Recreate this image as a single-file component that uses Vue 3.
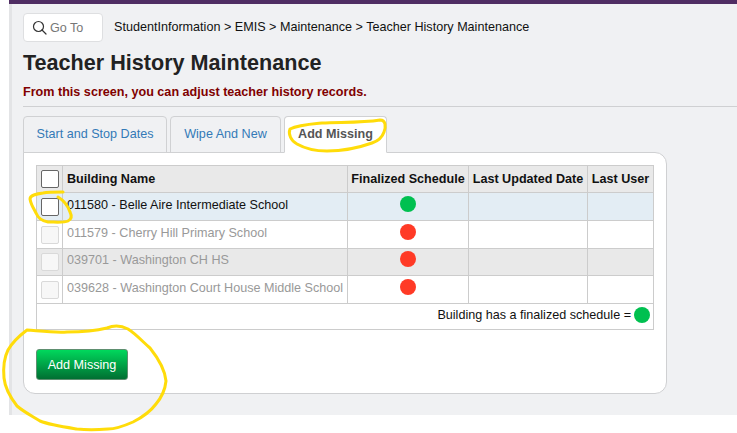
<script setup>
const rows = [
  { name: '011580 - Belle Aire Intermediate School', ok: true, cls: 'sel' },
  { name: '011579 - Cherry Hill Primary School', ok: false, cls: 'dis' },
  { name: '039701 - Washington CH HS', ok: false, cls: 'dis alt' },
  { name: '039628 - Washington Court House Middle School', ok: false, cls: 'dis' },
]
</script>

<template>
  <div class="page">
    <div class="app">
      <div class="topbar"></div>
      <div class="nav">
        <div class="goto">
          <svg width="15" height="15" viewBox="0 0 15 15" fill="none" stroke="#333" stroke-width="1.2">
            <circle cx="6.5" cy="6.5" r="5" />
            <path d="M10 10l4 4" stroke-linecap="round" />
          </svg>
          <span>Go To</span>
        </div>
        <div class="crumbs">StudentInformation &gt; EMIS &gt; Maintenance &gt; Teacher History Maintenance</div>
      </div>
      <h1>Teacher History Maintenance</h1>
      <p class="hint">From this screen, you can adjust teacher history records.</p>
      <div class="rule"></div>
      <div class="tabs">
        <div class="tab t1">Start and Stop Dates</div>
        <div class="tab t2">Wipe And New</div>
        <div class="tab t3 active">Add Missing</div>
      </div>
      <div class="card">
        <table>
          <colgroup>
            <col class="c1" /><col class="c2" /><col class="c3" /><col class="c4" /><col class="c5" />
          </colgroup>
          <thead>
            <tr>
              <th class="ck"><span class="box"></span></th>
              <th class="left">Building Name</th>
              <th>Finalized Schedule</th>
              <th>Last Updated Date</th>
              <th>Last User</th>
            </tr>
          </thead>
          <tbody>
            <tr v-for="r in rows" :key="r.name" :class="r.cls">
              <td class="ck"><span class="box"></span></td>
              <td class="name">{{ r.name }}</td>
              <td class="dotcell"><span class="dot" :class="r.ok ? 'green' : 'red'"></span></td>
              <td></td>
              <td></td>
            </tr>
            <tr class="legend">
              <td colspan="5">
                <div class="legend-in">Building has a finalized schedule = <span class="dot green"></span></div>
              </td>
            </tr>
          </tbody>
        </table>
        <button class="btn">Add Missing</button>
      </div>
    </div>
    <svg class="ink" width="737" height="433" viewBox="0 0 737 433" fill="none" stroke="#ffdc0a" stroke-width="3" stroke-linecap="round" stroke-linejoin="round">
      <path d="M290 129C298 125 312 124 322 123C340 122 362 123 380 120C386 120 386 127 384 132C382 138 378 141 372 143C358 148 342 151 327 151C314 151 304 148 297 144C291 141 288 134 290 129Z" />
      <path d="M63 192C55 192 48 192 43 193C36 194 30 195 30 199C31 205 34 209 36 213C38 218 42 221 48 222C55 222 64 223 68 221C72 219 72 216 70 212C68 206 63 200 58 197" />
      <path d="M107 328C112 326 120 325 128 329C136 334 143 342 150 348C158 358 165 370 166 381C165 391 161 398 156 404C150 412 141 418 133 422C124 426 116 429 108 429C96 430 86 430 77 429C64 427 50 425 40 421C32 416 24 412 17 406C10 397 5 388 4 378C3 367 4 358 8 350C12 343 19 336 27 330C40 331 55 333 67 332C80 332 95 331 107 328Z" />
    </svg>
  </div>
</template>

<style>
html, body { margin: 0; background: #fff; }
</style>

<style scoped>
.page {
  position: relative;
  width: 737px;
  height: 433px;
  overflow: hidden;
  padding-left: 9px;
  box-sizing: border-box;
  font-family: "Liberation Sans", Arial, sans-serif;
}
.app {
  height: 415px;
  box-sizing: border-box;
  background: #f0f1f3;
  border-left: 3px solid #e3e4e6;
  padding-left: 11px;
}
.topbar {
  height: 4px;
  margin-left: -14px;
  background: #4f2d63;
}
.nav {
  display: flex;
  align-items: center;
  margin-top: 9px;
  height: 29px;
}
.goto {
  width: 80px;
  height: 29px;
  box-sizing: border-box;
  background: #fff;
  border: 1px solid #dedfe1;
  border-radius: 4px;
  display: flex;
  align-items: center;
  gap: 3px;
  padding-left: 8px;
  font-size: 12.6px;
  color: #777;
}
.crumbs {
  margin-left: 11px;
  margin-top: -2px;
  font-size: 12.6px;
  color: #111;
}
h1 {
  margin: 8px 0 0;
  font-size: 21.6px;
  line-height: 25px;
  font-weight: 700;
  color: #222;
}
.hint {
  margin: 10px 0 0;
  font-size: 12.6px;
  line-height: 15px;
  font-weight: 700;
  color: #800000;
}
.rule {
  height: 1px;
  background: #cfd0d2;
  margin-top: 6px;
}
.tabs {
  display: flex;
  gap: 3px;
  margin-top: 9px;
  height: 37px;
  position: relative;
  z-index: 1;
}
.tab {
  box-sizing: border-box;
  height: 37px;
  padding-bottom: 2px;
  border: 1px solid #d0d1d3;
  border-bottom: 1px solid #d0d1d3;
  border-radius: 4px 4px 0 0;
  font-size: 12.6px;
  color: #337ab7;
  display: flex;
  align-items: center;
  justify-content: center;
}
.t1 { width: 144px; }
.t2 { width: 111px; }
.t3 { width: 103px; }
.active {
  background: #fff;
  border-bottom-color: #fff;
  font-weight: 700;
  color: #555;
}
.card {
  box-sizing: border-box;
  width: 644px;
  height: 242px;
  margin-top: -1px;
  background: #fff;
  border: 1px solid #cfd0d2;
  border-radius: 0 12px 12px 12px;
  padding: 12px 12px 0;
}
table {
  border-collapse: collapse;
  table-layout: fixed;
  width: 618px;
  font-size: 12.6px;
  color: #111;
}
.c1 { width: 26px; }
.c2 { width: 285px; }
.c3 { width: 121px; }
.c4 { width: 119px; }
.c5 { width: 66px; }
th, td {
  border: 1px solid #cccccc;
  padding: 0;
  height: 28px;
  box-sizing: border-box;
}
th {
  background: #e9e9e9;
  height: 27px;
  font-weight: 700;
  text-align: center;
  color: #111;
  white-space: nowrap;
}
th.left { text-align: left; padding-left: 4px; }
td.name { padding: 0 0 4px 4px; white-space: nowrap; }
.ck { text-align: center; line-height: 0; }
.box {
  display: inline-block;
  box-sizing: border-box;
  width: 18px;
  height: 18px;
  background: #fff;
  border: 1px solid #666;
  border-radius: 2px;
  vertical-align: middle;
}
.sel td { background: #e3edf4; }
.dis td { color: #999; }
.dis .box { background: #f7f7f7; border-color: #d9d9d9; }
.alt td { background: #e9e9e9; height: 27px; }
.dotcell { text-align: center; line-height: 0; padding-bottom: 6px; }
.dot {
  display: inline-block;
  width: 16px;
  height: 16px;
  border-radius: 50%;
  vertical-align: middle;
}
.green { background: #00c050; }
.red { background: #ff3a26; }
.legend td { height: 26px; }
.legend-in {
  display: flex;
  justify-content: flex-end;
  align-items: center;
  gap: 3px;
  padding: 0 3px 3px 0;
}
.btn {
  display: block;
  margin-top: 19px;
  width: 92px;
  height: 31px;
  box-sizing: border-box;
  border: 1px solid #5e8f70;
  border-radius: 3px;
  background: linear-gradient(#00d85c, #006f32);
  color: #fff;
  font: 12.6px "Liberation Sans", Arial, sans-serif;
  padding: 0;
}
.ink {
  position: absolute;
  left: 0;
  top: 0;
  z-index: 2;
  pointer-events: none;
}
</style>
